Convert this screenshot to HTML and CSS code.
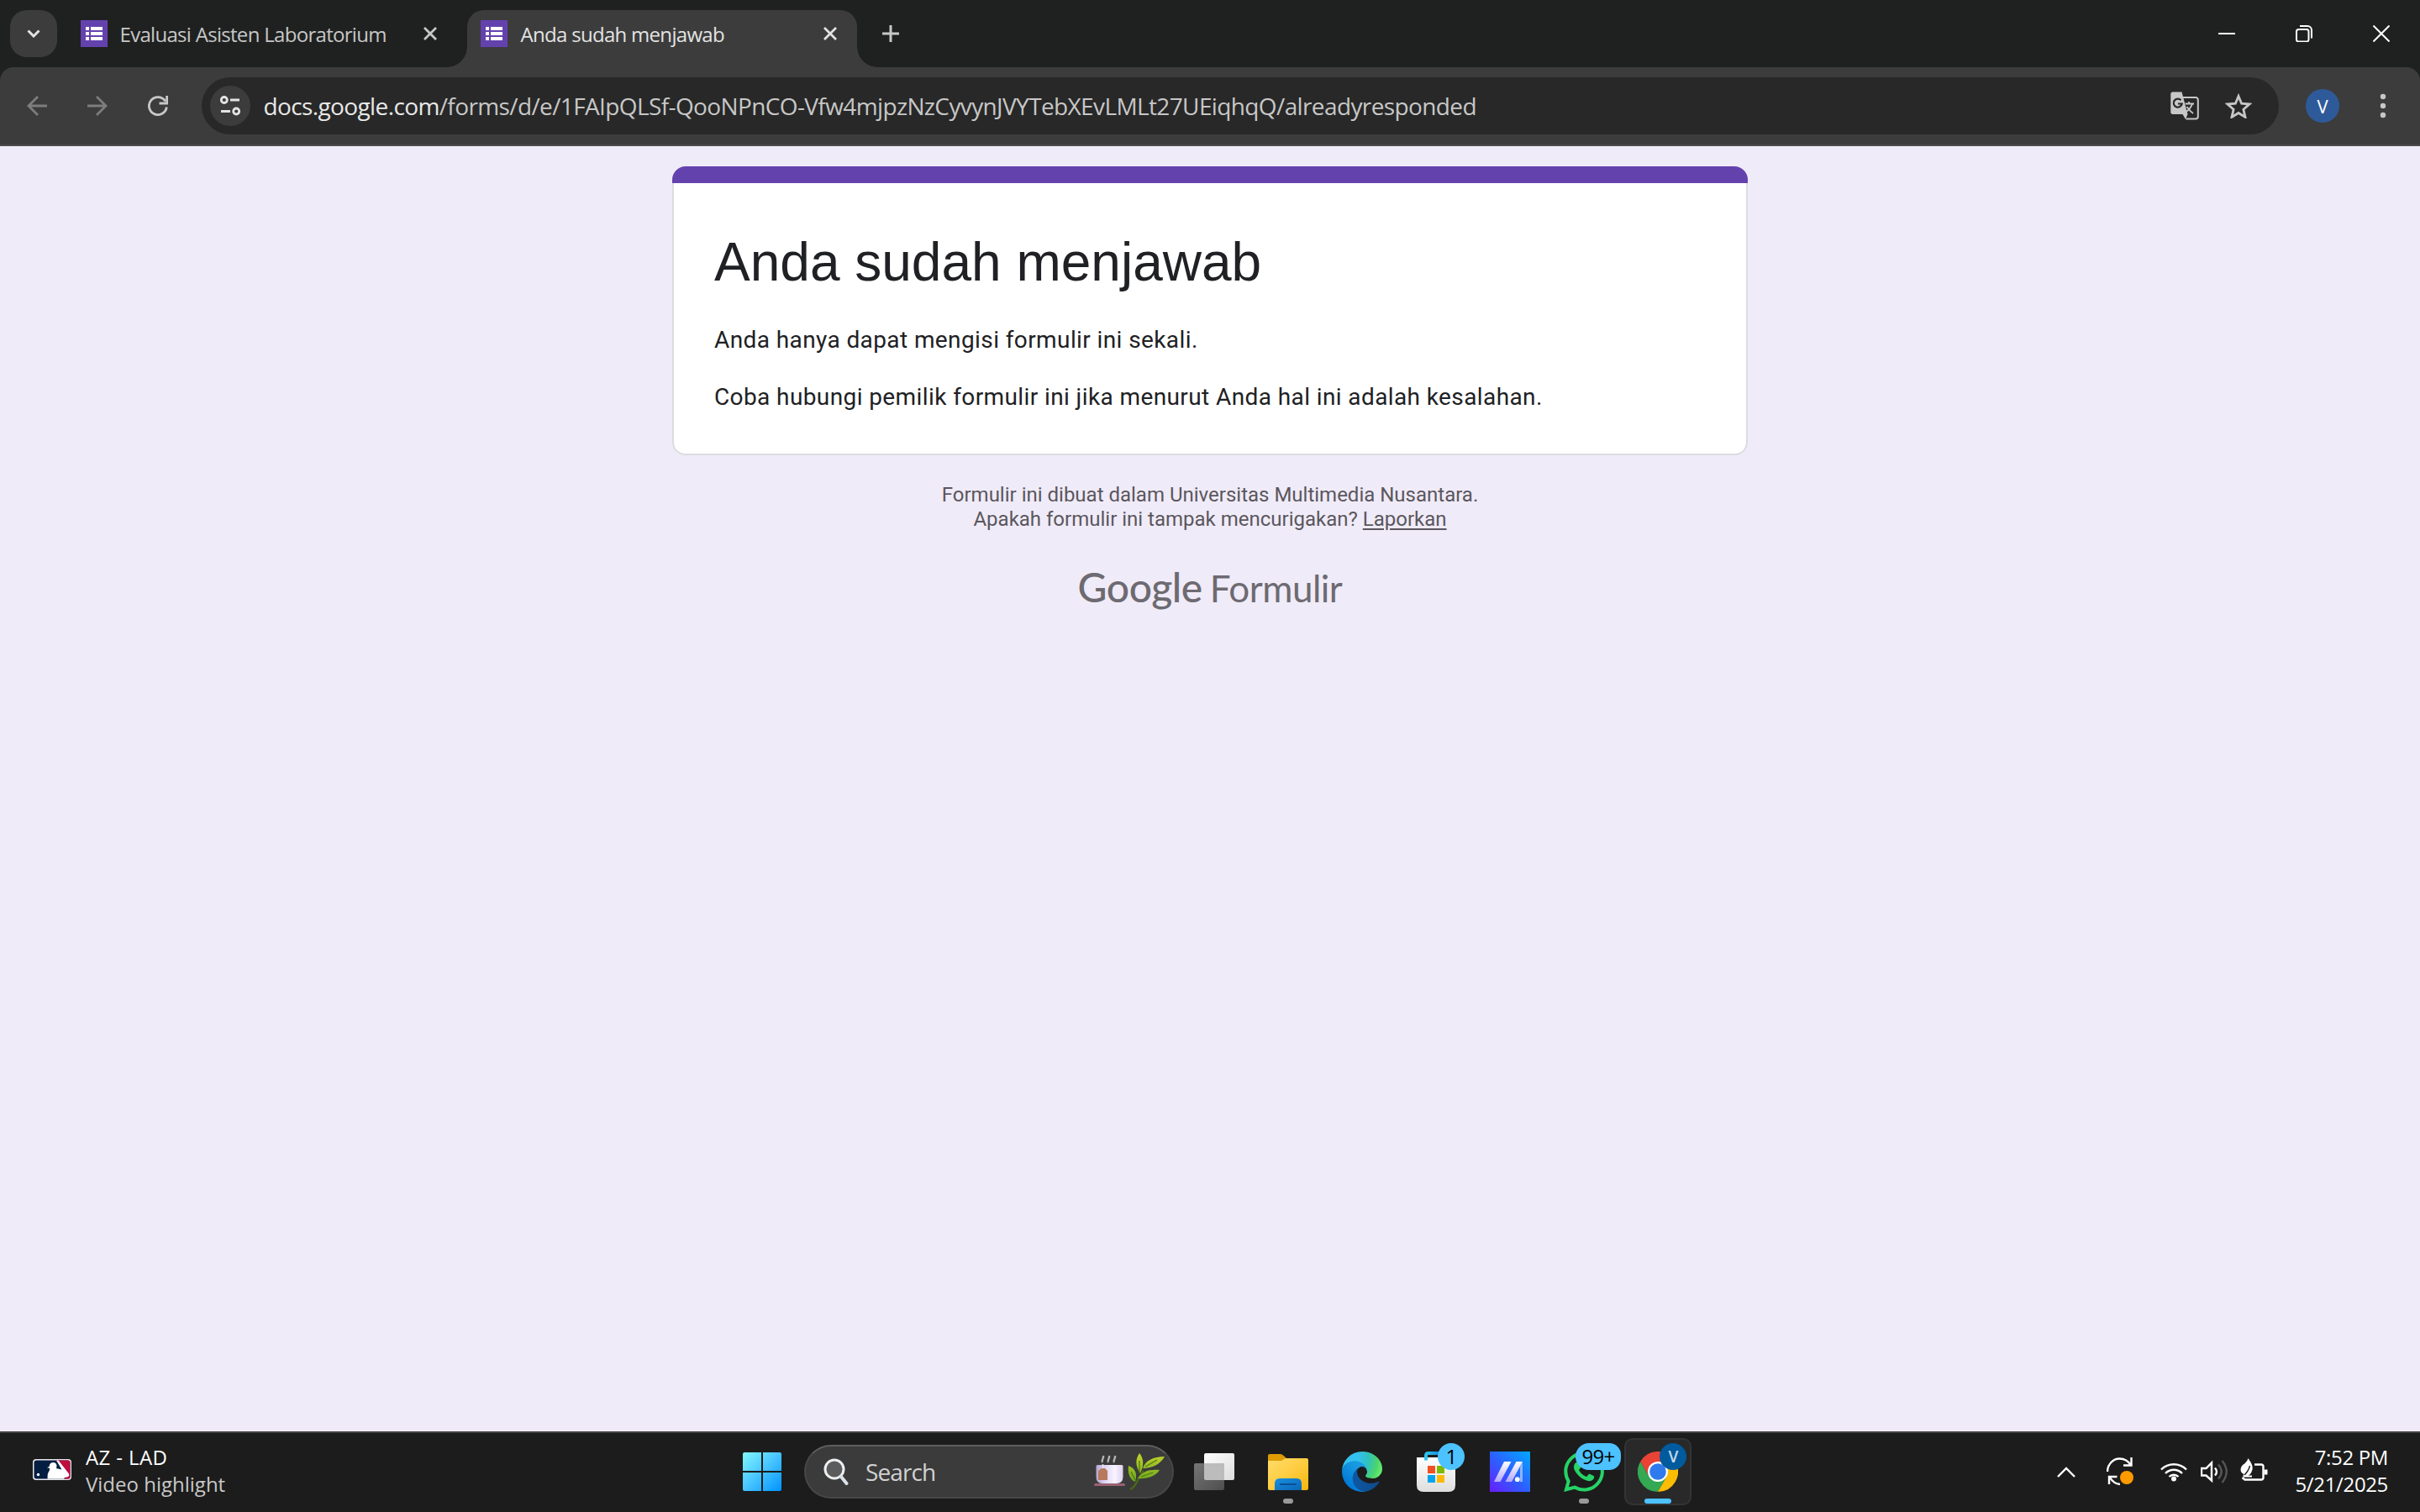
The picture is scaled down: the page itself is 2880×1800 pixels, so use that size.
FILE: index.html

```html
<!DOCTYPE html>
<html lang="id">
<head>
<meta charset="utf-8">
<title>Anda sudah menjawab</title>
<link rel="stylesheet" href="styles.css">
</head>
<body>
<header class="tabstrip">
  <button class="tab-search"><svg width="16" height="10" viewBox="0 0 16 10"><path d="M1.5 1.5 8 8l6.500-6.500" fill="none" stroke="#e3e3e3" stroke-width="3"/></svg></button>
  <div class="tab">
    <svg class="favicon" viewBox="0 0 32 32"><path fill="#6442ae" d="M0 0h32v32H0z"/><path fill="#fff" d="M6 8h4v4H6zm6 0h14v4H12zM6 14h4v4H6zm6 0h14v4H12zM6 20h4v4H6zm6 0h14v4H12z"/></svg>
    <span class="tab-title">Evaluasi Asisten Laboratorium</span>
    <svg class="tab-close" viewBox="0 0 16 16"><path d="m1 1 14 14M15 1 1 15"/></svg>
  </div>
  <div class="tab tab-active">
    <svg class="favicon" viewBox="0 0 32 32"><path fill="#6442ae" d="M0 0h32v32H0z"/><path fill="#fff" d="M6 8h4v4H6zm6 0h14v4H12zM6 14h4v4H6zm6 0h14v4H12zM6 20h4v4H6zm6 0h14v4H12z"/></svg>
    <span class="tab-title tab-title-active">Anda sudah menjawab</span>
    <svg class="tab-close tab-close-active" viewBox="0 0 16 16"><path d="m1 1 14 14M15 1 1 15"/></svg>
  </div>
  <svg class="new-tab" width="20" height="20" viewBox="0 0 20 20"><path d="M10 0v20M0 10h20" stroke="#c7c7c7" stroke-width="3"/></svg>
  <div class="window-controls">
    <svg width="20" height="20" viewBox="0 0 20 20"><path d="M0 10h20"/></svg>
    <svg width="20" height="20" viewBox="0 0 20 20"><rect x="1" y="5" width="14.5" height="14.5" rx="2.5"/><path d="M5 1h9a5 5 0 0 1 5 5v9.500"/></svg>
    <svg width="20" height="20" viewBox="0 0 20 20"><path d="m.5.5 19 19M19.500.5l-19 19"/></svg>
  </div>
</header>

<nav class="toolbar-bg"><div class="toolbar">
  <div class="nav-buttons">
    <svg class="dim" viewBox="0 0 24 24"><path d="M24 12H1.500M13 1 2 12l11 11"/></svg>
    <svg class="dim" viewBox="0 0 24 24"><path d="M0 12h22.500M11 1l11 11-11 11"/></svg>
    <svg viewBox="0 0 24 24"><path d="M22.300 13.500A10.500 10.500 0 1 1 20.800 6.500"/><path d="M22.600 0v9H13.500"/></svg>
  </div>
  <div class="omnibox">
    <span class="site-info"><svg width="24" height="24" viewBox="0 0 24 24"><g fill="none" stroke="#e3e3e3" stroke-width="2.8"><circle cx="4.800" cy="5" r="3.500"/><path d="M12 5h11M1 18.500h11"/><circle cx="19.200" cy="18.500" r="3.500"/></g></svg></span>
    <span class="url"><span class="url-host">docs.google.com</span>/forms/d/e/1FAIpQLSf-QooNPnCO-Vfw4mjpzNzCyvynJVYTebXEvLMLt27UEiqhqQ/alreadyresponded</span>
    <svg class="translate" width="34" height="34" viewBox="0 0 34 34"><path d="M14 7h16a2.800 2.800 0 0 1 2.800 2.800v20a2.800 2.800 0 0 1-2.800 2.800H18.500" fill="none" stroke="#c7c7c7" stroke-width="2"/><path fill="#c7c7c7" d="M3 .5h10.500L20.500 27 18 33 14.500 27H3A2.700 2.700 0 0 1 .3 24V3.200A2.700 2.700 0 0 1 3 .5z"/><path d="M12.500 10.300A5 5 0 1 0 13.700 14.500H9" fill="none" stroke="#282828" stroke-width="2.2"/><path d="M17.500 14.500H28M22 12v2.500M26 14.500c-1 4-4 7-7 9.500M19.500 18c2 3 4.500 6 7.500 8" fill="none" stroke="#c7c7c7" stroke-width="1.8"/></svg>
    <svg class="star" width="32" height="30" viewBox="0 0 32 30"><path d="m16 3.500 3.600 8.700 9.400.8-7.100 6.200 2.100 9.200-8-4.900-8 4.900 2.100-9.200L3 13l9.400-.8z" fill="none" stroke="#c7c7c7" stroke-width="2.8"/></svg>
  </div>
  <span class="avatar">V</span>
  <svg class="menu" width="8" height="30" viewBox="0 0 8 30"><g fill="#c7c7c7"><circle cx="4" cy="4" r="3.2"/><circle cx="4" cy="15" r="3.2"/><circle cx="4" cy="26" r="3.2"/></g></svg>
</div></nav>

<main class="page">
  <section class="card">
    <h1 class="card-title">Anda sudah menjawab</h1>
    <p class="card-text">Anda hanya dapat mengisi formulir ini sekali.</p>
    <p class="card-text">Coba hubungi pemilik formulir ini jika menurut Anda hal ini adalah kesalahan.</p>
  </section>
  <div class="disclaimer">
    <div>Formulir ini dibuat dalam Universitas Multimedia Nusantara.</div>
    <div>Apakah formulir ini tampak mencurigakan? <a class="report">Laporkan</a></div>
  </div>
  <div class="brand"><span class="brand-google">Google</span><span class="brand-forms">Formulir</span></div>
</main>

<footer class="taskbar">
  <div class="widget">
    <svg width="46" height="25" viewBox="0 0 46 25"><rect width="46" height="25" rx="4" fill="#e8e8ec"/><rect x="1.5" y="1.5" width="43" height="22" rx="3" fill="#041e42"/><path d="M28 1.500h14a2.500 2.500 0 0 1 2.500 2.500v17a2.500 2.500 0 0 1-2.500 2.500h-5l5-4z" fill="#bf0d3e"/><path d="M28 1.500h2.500L43 17.500c1 3-1 4.200-5 4.500l-1 1.500H17.500c.3-3-.3-5 1-7.500 1-2 1.500-2.500 1.500-3.500v-1.700l-3-.6 2.700-1.400c0-3 2-4.800 4.500-4.800 3 0 4.500 2 4.300 4.500l-.5 2.500 6.500 1.500z" fill="#fff"/><circle cx="6.500" cy="18.500" r="1.700" fill="#fff"/></svg>
    <div class="widget-text"><div class="widget-title">AZ - LAD</div><div class="widget-sub">Video highlight</div></div>
  </div>

  <div class="apps">
    <div class="app"><svg width="46" height="46" viewBox="0 0 46 46"><defs><linearGradient id="win" gradientUnits="userSpaceOnUse" x1="0" y1="0" x2="46" y2="46"><stop offset="0" stop-color="#80f8ff"/><stop offset=".5" stop-color="#47c4ff"/><stop offset="1" stop-color="#0093ff"/></linearGradient></defs><path fill="url(#win)" d="M2 0h20v22H0V2a2 2 0 0 1 2-2zm22 0h20a2 2 0 0 1 2 2v20H24zM0 24h22v22H2a2 2 0 0 1-2-2zm24 0h22v20a2 2 0 0 1-2 2H24z"/></svg></div>

    <div class="search">
      <svg width="30" height="32" viewBox="0 0 30 32"><circle cx="13" cy="13" r="11" fill="#5c5c5c" stroke="#ecf0f3" stroke-width="3"/><path d="m21 22 6.500 8" stroke="#dbe2e8" stroke-width="4" stroke-linecap="round"/></svg>
      <span class="search-label">Search</span>
      <svg class="search-art" width="84" height="44" viewBox="0 0 84 44"><defs><linearGradient id="cup"><stop offset="0" stop-color="#b3a6cf"/><stop offset=".35" stop-color="#e3d9f5"/><stop offset=".7" stop-color="#f8f3ff"/><stop offset="1" stop-color="#dcd0f0"/></linearGradient><linearGradient id="leaf" x1="0" y1="0" x2="0" y2="1"><stop offset="0" stop-color="#c3d42b"/><stop offset="1" stop-color="#6da51f"/></linearGradient></defs>
        <path d="M10 11c-2-3 2-4 1-8M17 11c-2-3 2-4 1-8M24 11c-2-3 2-4 1-8" fill="none" stroke="#b4b4b4" stroke-width="2.4"/>
        <rect y="36" width="37" height="3" rx="1.500" fill="#9a6272"/>
        <path d="M2.500 15.500q0-1.500 1.500-1.500h29q1.500 0 1.500 1.500V28q0 8-8 8H10q-7.500 0-7.500-8z" fill="url(#cup)"/>
        <path d="M10.500 13v7" stroke="#e8e0f0" stroke-width="1.5"/><path d="m5 21 4-3h4l3 3v11H5z" fill="#b87a5c"/>
        <path d="M43 43c8-3 8-13 16-22" fill="none" stroke="#4c6b12" stroke-width="2"/>
        <path d="M54 0c5 6 6 14 1 24-6-9-6-17-1-24zM58 18c3-9 12-14 26-14-5 9-15 14-26 14zM41 15c8 3 11 9 8 19-7-3-9-11-8-19zM52 30c5-8 13-11 26-10-5 8-16 11-26 10z" fill="url(#leaf)"/>
        <path d="M54 9v14M61 16 75 8M44 22l5 10M56 28l14-5" stroke="#4c7a12" stroke-width="1.3"/></svg>
    </div>

    <div class="app"><svg width="48" height="44" viewBox="0 0 48 44"><defs><linearGradient id="tvw" x1="0" y1="0" x2="1" y2="1"><stop offset="0" stop-color="#fff"/><stop offset="1" stop-color="#dcdcdc"/></linearGradient><linearGradient id="tvg" x1="0" y1="0" x2="1" y2="1"><stop offset="0" stop-color="#757575"/><stop offset="1" stop-color="#4e4e4e"/></linearGradient></defs><rect x="12" width="36" height="32" rx="2" fill="url(#tvw)"/><rect y="12" width="36" height="32" rx="2" fill="url(#tvg)"/><path d="M12 12h24v20H14a2 2 0 0 1-2-2z" fill="#bcbcbc"/></svg></div>

    <div class="app"><svg width="48" height="44" viewBox="0 0 48 44"><defs><linearGradient id="fold" x1="0" y1="0" x2="1" y2="1"><stop offset="0" stop-color="#ffdc6b"/><stop offset=".5" stop-color="#ffcd42"/><stop offset="1" stop-color="#f9b50b"/></linearGradient><linearGradient id="tray" x1="0" y1="0" x2="1" y2="1"><stop offset="0" stop-color="#1a90e0"/><stop offset="1" stop-color="#0a66b7"/></linearGradient></defs><path fill="#dd9c02" d="M2 1h12.500q2 0 3.500 1.500L22 6v4H0V3q0-2 2-2z"/><path fill="url(#fold)" d="M0 9h15q2 0 3.500-1.500T22 6h24q2 0 2 2v34q0 2-2 2H2q-2 0-2-2z"/><path fill="url(#tray)" d="M8 44V36q0-6 6-6h20q6 0 6 6v8z"/><path d="M15 37h18" stroke="#0b4f92" stroke-width="2.2" stroke-linecap="round"/></svg><i class="running"></i></div>

    <div class="app"><svg width="48" height="48" viewBox="0 0 256 256"><defs><linearGradient id="e1" gradientUnits="userSpaceOnUse" x1="63" y1="177" x2="242" y2="177"><stop offset="0" stop-color="#0c59a4"/><stop offset="1" stop-color="#114a8b"/></linearGradient><linearGradient id="e2" gradientUnits="userSpaceOnUse" x1="157" y1="105" x2="46" y2="226"><stop offset="0" stop-color="#1b9de2"/><stop offset=".35" stop-color="#1595df"/><stop offset="1" stop-color="#0078d7"/></linearGradient><radialGradient id="e3" gradientUnits="userSpaceOnUse" cx="30" cy="50" r="235"><stop offset="0" stop-color="#35c1f1"/><stop offset=".35" stop-color="#34c1ed"/><stop offset=".6" stop-color="#2fc2bf"/><stop offset=".85" stop-color="#4cd46c"/><stop offset="1" stop-color="#66eb6e"/></radialGradient></defs><g transform="translate(-4.63 -4.92)"><path fill="url(#e1)" d="M235.680 195.460a93.730 93.730 0 0 1-10.540 4.710 101.870 101.870 0 0 1-35.900 6.460c-47.320 0-88.540-32.550-88.540-74.320A31.480 31.480 0 0 1 117.130 105c-42.800 1.800-53.800 46.400-53.800 72.530 0 73.880 68.090 81.370 82.760 81.370 7.910 0 19.840-2.300 27-4.560l1.310-.44a128.340 128.340 0 0 0 66.600-52.800 4 4 0 0 0-5.320-5.640z"/><path fill="url(#e2)" d="M110.340 246.340A79.200 79.200 0 0 1 87.600 225a80.720 80.720 0 0 1 29.530-120c3.120-1.470 8.450-4.130 15.540-4a32.350 32.350 0 0 1 25.690 13 31.880 31.880 0 0 1 6.360 18.660c0-.21 24.460-79.600-80-79.600-43.900 0-80 41.660-80 78.210a130.150 130.150 0 0 0 12.110 56 128 128 0 0 0 156.380 67.110 75.550 75.550 0 0 1-62.780-8z"/><path fill="url(#e3)" d="M156.940 153.780c-.81 1.050-3.300 2.500-3.300 5.660 0 2.610 1.700 5.120 4.720 7.230 14.380 10 41.490 8.680 41.560 8.680a59.560 59.560 0 0 0 30.270-8.350 61.380 61.380 0 0 0 30.430-52.880c.26-22.410-8-37.310-11.340-43.910C228.090 28.760 182.350 4.920 132.610 4.920a128 128 0 0 0-128 126.200c.48-36.540 36.800-66.050 80-66.050 3.500 0 23.460.34 42 10.070 16.340 8.580 24.900 18.940 30.850 29.210 6.180 10.670 7.280 24.150 7.280 29.520s-2.740 13.330-7.800 19.910z"/></g></svg></div>

    <div class="app"><svg width="46" height="48" viewBox="0 0 46 48"><defs><linearGradient id="bag" x1="0" y1="0" x2="0" y2="1"><stop offset="0" stop-color="#fff"/><stop offset="1" stop-color="#dedede"/></linearGradient><linearGradient id="grip"><stop offset="0" stop-color="#2fc3ee"/><stop offset="1" stop-color="#0a6fd0"/></linearGradient></defs><path d="M11 10V5q0-3 3-3h18q3 0 3 3v5" fill="none" stroke="url(#grip)" stroke-width="4"/><path fill="url(#bag)" d="M0 7h46v33q0 8-8 8H8q-8 0-8-8z"/><path d="M11 7v3.500" stroke="#2fc3ee" stroke-width="4"/><path fill="#f25022" d="M13 17h9v9h-9z"/><path fill="#7fba00" d="M24 17h9v9h-9z"/><path fill="#00a4ef" d="M13 28h9v9h-9z"/><path fill="#ffb900" d="M24 28h9v9h-9z"/></svg><b class="badge badge-store">1</b></div>

    <div class="app"><svg width="48" height="48" viewBox="0 0 48 48"><defs><linearGradient id="asus" x1="0" y1="1" x2="1" y2="0"><stop offset="0" stop-color="#6a1cff"/><stop offset=".45" stop-color="#2f5cff"/><stop offset="1" stop-color="#00a8ff"/></linearGradient><linearGradient id="bar" x1="0" y1="0" x2="0" y2="1"><stop offset="0" stop-color="#fff"/><stop offset="1" stop-color="#b4a8ff"/></linearGradient></defs><path fill="url(#asus)" d="M0 0h48v48H0z"/><path fill="url(#bar)" d="M17 12h8.500L12.500 36H5zM31.500 12H39L26 36h-7.500z"/><path fill="#8fb4f8" d="M36 18l3-6v24h-3z"/><circle cx="32.8" cy="33.2" r="2.9" fill="#fff"/></svg></div>

    <div class="app"><svg width="48" height="48" viewBox="0 0 24 24"><path fill="#25d366" d="M17.472 14.382c-.297-.149-1.758-.867-2.030-.967-.273-.099-.471-.148-.670.150-.197.297-.767.966-.940 1.164-.173.199-.347.223-.644.075-.297-.150-1.255-.463-2.390-1.475-.883-.788-1.480-1.761-1.653-2.059-.173-.297-.018-.458.130-.606.134-.133.298-.347.446-.520.149-.174.198-.298.298-.497.099-.198.050-.371-.025-.520-.075-.149-.669-1.612-.916-2.207-.242-.579-.487-.500-.669-.510-.173-.008-.371-.010-.570-.010-.198 0-.520.074-.792.372-.272.297-1.040 1.016-1.040 2.479 0 1.462 1.065 2.875 1.213 3.074.149.198 2.096 3.200 5.077 4.487.709.306 1.262.489 1.694.625.712.227 1.360.195 1.871.118.571-.085 1.758-.719 2.006-1.413.248-.694.248-1.289.173-1.413-.074-.124-.272-.198-.570-.347m-5.421 7.403h-.004a9.870 9.870 0 0 1-5.031-1.378l-.361-.214-3.741.982.998-3.648-.235-.374a9.860 9.860 0 0 1-1.510-5.260c.001-5.450 4.436-9.884 9.888-9.884 2.640 0 5.122 1.030 6.988 2.898a9.825 9.825 0 0 1 2.893 6.994c-.003 5.450-4.437 9.884-9.885 9.884m8.413-18.297A11.815 11.815 0 0 0 12.050 0C5.495 0 .160 5.335.157 11.892c0 2.096.547 4.142 1.588 5.945L.057 24l6.305-1.654a11.882 11.882 0 0 0 5.683 1.448h.005c6.554 0 11.890-5.335 11.893-11.893a11.821 11.821 0 0 0-3.480-8.413z"/></svg><b class="badge badge-chat">99+</b><i class="running"></i></div>

    <div class="app"><div class="app-focus"><svg width="48" height="48" viewBox="0 0 48 48"><path fill="#ea4335" d="M24 12h20.800A24 24 0 0 0 3.200 12L13.600 30 24 24z"/><path fill="#34a853" d="M3.200 12A24 24 0 0 0 24 48l10.400-18L24 24l-10.400 6z"/><path fill="#fbbc04" d="M24 48a24 24 0 0 0 20.800-36H24v12l10.400 6z"/><circle cx="24" cy="24" r="12" fill="#fff"/><circle cx="24" cy="24" r="9.8" fill="#2f7bee"/></svg></div><b class="badge badge-profile">V</b><i class="running running-active"></i></div>
  </div>

  <div class="tray">
    <svg class="tray-more" width="22" height="13" viewBox="0 0 22 13"><path d="M1 12 11 2l10 10"/></svg>
    <svg class="tray-sync" width="32" height="34" viewBox="0 0 32 34"><path d="M1 17C1 9 7 1.500 15.500 1.500c6 0 10.500 3 13.500 8M29.500 0v9.500H20M3 32V23h9.500M4 24c3 5 7 7.500 12 8"/><circle cx="24" cy="24" r="8" fill="#ff9a00"/></svg>
    <svg class="tray-wifi" width="32" height="24" viewBox="0 0 32 24"><path d="M1 9.500a21 21 0 0 1 30 0M6 14a14 14 0 0 1 20 0M10.500 18a8 8 0 0 1 11 0"/><circle cx="16" cy="20.500" r="3" fill="#fff"/></svg>
    <svg class="tray-sound" width="32" height="28" viewBox="0 0 32 28"><path d="M1 10v8.500h5.500L13 24.500V3.500L6.500 10z"/><path d="M17 9.500q4 4.500 0 9"/><path class="wave-off" d="M21 5.500q7.500 8.500 0 17M25.500 1q10.500 13 0 26"/></svg>
    <svg class="tray-power" width="33" height="28" viewBox="0 0 33 28"><path d="M17 7.500h8a2.500 2.500 0 0 1 2.500 2.500v13a2.500 2.500 0 0 1-2.500 2.500H5.500l-3-2.500"/><path class="solid" d="M28.500 13.500H32.500v6h-4z"/><path class="solid" d="M9.500 0c4 6 6.500 10 4.500 15-1 3.500-3 5-5 5.500H14v2H4C3 21.500 3.500 20 4.500 19-1 17 0 11 3 8c3-2 5.500-4.500 6.500-8z"/><path class="vein" d="M11.500 9c-1 4.500-3 7.500-6.500 11"/></svg>
    <div class="clock"><div>7:52 PM</div><div>5/21/2025</div></div>
  </div>
</footer>
</body>
</html>
```

FILE: styles.css

```css
* { box-sizing: border-box; }
body {
  margin: 0;
  width: 2880px;
  height: 1800px;
  display: flex;
  flex-direction: column;
  overflow: hidden;
  font-family: "Open Sans", "Noto Sans", sans-serif;
  background: #f0ebf8;
}
svg { display: block; flex: none; }
button { border: 0; padding: 0; }

/* Tab strip */
.tabstrip {
  height: 80px;
  background: #1f2120;
  display: flex;
  align-items: center;
  padding-left: 12px;
}
.tab-search {
  width: 56px;
  height: 56px;
  border-radius: 20px;
  background: #3c3c3c;
  display: grid;
  place-items: center;
}
.tab {
  width: 464px;
  height: 68px;
  margin: 12px 0 0 12px;
  padding: 0 24px 12px 16px;
  display: flex;
  align-items: center;
}
.tab-active {
  position: relative;
  background: #3c3c3c;
  border-radius: 20px 20px 0 0;
}
.tab-active::before,
.tab-active::after {
  content: "";
  position: absolute;
  bottom: 0;
  width: 24px;
  height: 24px;
}
.tab-active::before { right: 100%; background: radial-gradient(circle at 0 0, transparent 23.5px, #3c3c3c 24px); }
.tab-active::after { left: 100%; background: radial-gradient(circle at 100% 0, transparent 23.5px, #3c3c3c 24px); }
.favicon { width: 32px; height: 32px; }
.tab-title {
  flex: 1;
  margin: 2px 0 0 14.5px;
  font-size: 24px;
  line-height: 32px;
  letter-spacing: -0.7px;
  white-space: nowrap;
  color: #c7c7c7;
}
.tab-title-active { margin-left: 15.5px; color: #e3e3e3; }
.tab-close { width: 16px; height: 16px; }
.tab-close path { fill: none; stroke: #c7c7c7; stroke-width: 2.8; }
.tab-close-active path { stroke: #e3e3e3; }
.new-tab { margin-left: 30px; }
.window-controls {
  margin-left: auto;
  padding-right: 36px;
  display: flex;
  gap: 72px;
}
.window-controls path,
.window-controls rect { fill: none; stroke: #fff; stroke-width: 2; }

/* Toolbar */
.toolbar-bg { background: #1f2120; }
.toolbar {
  height: 94px;
  padding: 0 40px 2px 32px;
  background: #3c3c3c;
  border-radius: 16px 16px 0 0;
  box-shadow: inset 0 -2px #4a494c;
  display: flex;
  align-items: center;
}
.nav-buttons { display: flex; gap: 48px; }
.nav-buttons svg { width: 24px; height: 24px; }
.nav-buttons path { fill: none; stroke: #c7c7c7; stroke-width: 2.8; }
.nav-buttons .dim path { stroke: #7d7d7d; }
.omnibox {
  width: 2472px;
  height: 68px;
  margin-left: 40px;
  padding: 0 32px 0 10px;
  border-radius: 34px;
  background: #282828;
  display: flex;
  align-items: center;
}
.site-info {
  width: 48px;
  height: 48px;
  border-radius: 50%;
  background: #3c3c3c;
  display: grid;
  place-items: center;
}
.url {
  flex: 1;
  margin: -1px 0 0 15.5px;
  font-size: 28px;
  line-height: 40px;
  letter-spacing: -0.62px;
  white-space: nowrap;
  color: #c7c7c7;
}
.url-host { color: #e8e8e8; }
.translate { margin-right: 31px; }
.avatar {
  width: 40px;
  height: 40px;
  margin-left: 32px;
  border-radius: 50%;
  background: #2f5a99;
  color: #fff;
  font-size: 22px;
  line-height: 40px;
  text-align: center;
}
.menu { margin-left: auto; }

/* Form page */
.page {
  height: 1530px;
  padding-top: 24px;
  display: flex;
  flex-direction: column;
  align-items: center;
}
.card {
  width: 1280px;
  height: 344px;
  padding: 54px 50px 50px;
  display: flex;
  flex-direction: column;
  border-top: 20px solid #6442ae;
  border-radius: 16px;
  background: #fff;
  box-shadow: inset 2px 0 #dadce0, inset -2px 0 #dadce0, inset 0 -2px #dadce0;
}
.card-title {
  margin: 0 0 33px;
  font: 400 64px/80px "Liberation Sans", sans-serif;
  color: #202124;
}
.card-text {
  margin: 0 0 28px;
  font: 28px/40px Roboto, sans-serif;
  letter-spacing: 0.4px;
  color: #202124;
}
.disclaimer {
  margin-top: 33px;
  font: 24px/29px Roboto, sans-serif;
  text-align: center;
  color: #5a575e;
}
.report {
  text-decoration: underline;
  text-decoration-thickness: 2px;
  text-underline-offset: 3px;
}
.brand {
  margin-top: 36px;
  height: 60px;
  line-height: 60px;
  display: flex;
  align-items: baseline;
  gap: 9px;
  font-family: Lato, sans-serif;
  color: #6d6a71;
}
.brand-google { font-size: 48px; font-weight: 500; letter-spacing: -0.5px; }
.brand-forms { font-size: 44px; letter-spacing: -0.5px; }

/* Taskbar */
.taskbar {
  height: 96px;
  background: #1c1c1c;
  box-shadow: inset 0 2px #424144;
  display: flex;
  align-items: center;
  color: #fff;
}
.widget {
  width: 863px;
  padding-left: 39px;
  display: flex;
  align-items: center;
  gap: 17px;
}
.widget svg { margin-top: -5px; }
.widget-text { font-size: 24px; line-height: 32px; margin-top: -2px; }
.widget-title { letter-spacing: 0.4px; }
.widget-sub { color: #c8c8c8; }
.apps { display: flex; align-items: center; }
.app {
  width: 88px;
  height: 96px;
  display: grid;
  place-items: center;
  position: relative;
}
.search {
  width: 440px;
  height: 64px;
  margin: 0 4px 0 6px;
  padding: 0 9px 0 21px;
  border: 2px solid #474747;
  border-top-color: #5e5e5e;
  border-radius: 32px;
  background: #3b3b3b;
  display: flex;
  align-items: center;
}
.search-label {
  flex: 1;
  margin-left: 20px;
  font-size: 28px;
  line-height: 36px;
  letter-spacing: -0.9px;
  color: #d2d2d2;
}
.running {
  position: absolute;
  bottom: 10px;
  left: 38px;
  width: 12px;
  height: 6px;
  border-radius: 3px;
  background: #9a9a9a;
}
.running-active { left: 28px; width: 32px; background: #4cc2ff; }
.badge {
  position: absolute;
  top: 14px;
  height: 32px;
  border-radius: 16px;
  background: #4cc2ff;
  color: #000;
  font-size: 24px;
  font-weight: 400;
  letter-spacing: -0.8px;
  line-height: 32px;
  text-align: center;
}
.badge-store { left: 46px; width: 32px; }
.badge-chat { left: 34px; width: 54px; border-radius: 16px 14px 14px 16px; }
.badge-profile {
  left: 46px;
  width: 32px;
  background: #005a9e;
  color: #c5d9ea;
  font-size: 19px;
  font-weight: 600;
}
.app-focus {
  width: 80px;
  height: 80px;
  border: 2px solid #343434;
  border-radius: 10px;
  background: #292929;
  display: grid;
  place-items: center;
}
.tray {
  margin-left: auto;
  padding-right: 38px;
  display: flex;
  align-items: center;
}
.tray path { fill: none; stroke: #fff; stroke-width: 2.4; }
.tray .wave-off { stroke: #555; }
.tray .solid { fill: #fff; stroke: none; }
.tray .vein { stroke: #1c1c1c; stroke-width: 1.4; }
.tray-more { margin-right: 37px; }
.tray-sync { margin-right: 32px; }
.tray-wifi { margin-right: 16px; }
.tray-sound { margin-right: 15px; }
.tray-power { margin-top: -4px; }
.clock {
  width: 143px;
  margin-top: -2px;
  font-size: 24px;
  line-height: 32px;
  letter-spacing: -0.35px;
  text-align: right;
}
```
